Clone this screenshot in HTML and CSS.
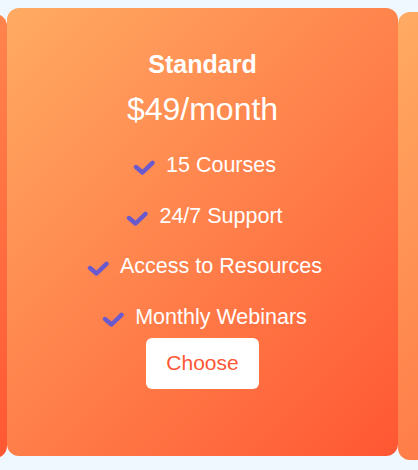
FILE: index.html
```html
<!DOCTYPE html>
<html lang="en">
<head>
<meta charset="utf-8">
<title>Pricing</title>
<link rel="stylesheet" href="styles.css">
</head>
<body>
<div class="viewport">
  <div class="track">
    <div class="card card-side card-left"></div>
    <div class="card card-main">
      <h2 class="plan-name">Standard</h2>
      <p class="plan-price">$49/month</p>
      <ul class="features">
        <li class="feature"><svg class="check" viewBox="0 0 22 16" width="22" height="16"><polyline points="3,8 9.5,13.5 19.5,3.8"/></svg><span>15 Courses</span></li>
        <li class="feature"><svg class="check" viewBox="0 0 22 16" width="22" height="16"><polyline points="3,8 9.5,13.5 19.5,3.8"/></svg><span>24/7 Support</span></li>
        <li class="feature"><svg class="check" viewBox="0 0 22 16" width="22" height="16"><polyline points="3,8 9.5,13.5 19.5,3.8"/></svg><span>Access to Resources</span></li>
        <li class="feature"><svg class="check" viewBox="0 0 22 16" width="22" height="16"><polyline points="3,8 9.5,13.5 19.5,3.8"/></svg><span>Monthly Webinars</span></li>
      </ul>
      <button class="choose">Choose</button>
    </div>
    <div class="card card-side card-right"></div>
  </div>
</div>
</body>
</html>
```

FILE: styles.css
```css
* { box-sizing: border-box; }
html, body {
  margin: 0;
  padding: 0;
  background: #f0f8ff;
  width: 418px;
  height: 470px;
  overflow: hidden;
  font-family: "Liberation Sans", Arial, sans-serif;
}
.viewport {
  width: 418px;
  height: 470px;
  overflow: hidden;
}
.track {
  display: flex;
  align-items: flex-start;
  margin-left: -384px;
  width: max-content;
}
.card {
  flex: 0 0 auto;
  width: 391px;
  border-radius: 12px;
  background: linear-gradient(135deg, #ffab63 0%, #ff5733 100%);
}
.card-left {
  margin-top: 14px;
  height: 444px;
}
.card-right {
  margin-top: 12px;
  height: 448px;
}
.card-main {
  margin-top: 8px;
  height: 448px;
  display: flex;
  flex-direction: column;
  align-items: center;
  padding-top: 42px;
  color: #ffffff;
}
.plan-name {
  margin: 0;
  font-size: 25px;
  font-weight: bold;
  line-height: 29px;
}
.plan-price {
  margin: 12px 0 0;
  font-size: 32px;
  line-height: 37px;
}
.features {
  list-style: none;
  margin: 25px 0 0;
  padding: 0 0 0 4px;
  display: flex;
  flex-direction: column;
  align-items: center;
  gap: 25.6px;
}
.feature {
  display: flex;
  align-items: center;
  gap: 11px;
  font-size: 21.5px;
  line-height: 25px;
}
.check {
  display: block;
  margin-top: 3px;
}
.check polyline {
  fill: none;
  stroke: #6a5acd;
  stroke-width: 4.4;
  stroke-linecap: round;
  stroke-linejoin: round;
}
.choose {
  margin-top: 8px;
  width: 113px;
  height: 51px;
  border: none;
  border-radius: 6px;
  background: #ffffff;
  color: #ff5733;
  font-family: "Liberation Sans", Arial, sans-serif;
  font-size: 21px;
  padding: 0;
  cursor: pointer;
}
```
